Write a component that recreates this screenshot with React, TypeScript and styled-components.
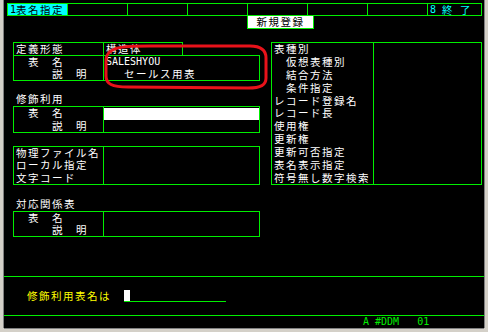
import React from 'react';
import styled, { createGlobalStyle } from 'styled-components';

const GREEN = '#00ee00';
const CYAN = '#00ffff';
const YELLOW = '#ffff00';

const GlobalStyle = createGlobalStyle`
  html, body {
    margin: 0;
    padding: 0;
    background: #d4d0c8;
  }
  body {
    width: 488px;
    height: 332px;
    overflow: hidden;
    font-family: "Noto Sans CJK JP", sans-serif;
  }
`;

const Window = styled.div`
  width: 488px;
  height: 332px;
  padding-left: 4px;
  box-sizing: border-box;
  background: #d4d0c8;
`;

const Screen = styled.div`
  position: relative;
  display: flex;
  flex-direction: column;
  width: 480px;
  height: 328px;
  padding-top: 3px;
  box-sizing: border-box;
  background: #000;
  color: #fff;
  box-shadow: -1px 0 0 #808080, 1px 0 0 #808080, 0 1px 0 #808080;
`;

const Jp = styled.span<{ $color?: string }>`
  display: inline-block;
  font-family: "Noto Sans CJK JP", sans-serif;
  font-size: 10.5px;
  letter-spacing: 1.5px;
  line-height: 10px;
  white-space: pre;
  vertical-align: top;
  color: ${props => props.$color ?? 'inherit'};
`;

const Ascii = styled.span<{ $color?: string }>`
  display: inline-block;
  font-family: "DejaVu Sans Mono", monospace;
  font-size: 10px;
  line-height: 10px;
  white-space: pre;
  vertical-align: top;
  color: ${props => props.$color ?? 'inherit'};
`;

/* function key bar */
const TopBar = styled.div`
  display: flex;
  width: 475px;
  height: 13px;
  margin-left: 3px;
  box-sizing: border-box;
  border: 1px solid ${GREEN};
`;

const FKey = styled.div<{ $active?: boolean }>`
  display: flex;
  align-items: center;
  flex: none;
  width: 60px;
  padding-left: 2px;
  box-sizing: border-box;
  border-right: 1px solid ${GREEN};
  background: ${props => props.$active ? CYAN : 'transparent'};
  color: ${props => props.$active ? '#000' : CYAN};

  &:last-child {
    flex: 1;
    border-right: none;
  }
`;

const ActionRow = styled.div`
  display: flex;
  height: 13px;
  padding-left: 243px;
`;

const ActionButton = styled.div`
  display: flex;
  align-items: center;
  justify-content: center;
  width: 67px;
  height: 13px;
  box-sizing: border-box;
  border: 1px solid ${GREEN};
  border-top: none;
  background: #fff;
  color: #000;
`;

/* body */
const Body = styled.div`
  display: flex;
  align-items: flex-start;
  gap: 11px;
  margin-top: 13px;
  padding-left: 9px;
`;

const LeftColumn = styled.div`
  display: flex;
  flex-direction: column;
  width: 247px;
`;

const FieldBox = styled.div<{ $width: number; $height: number; $labelWidth: number; $gap?: number }>`
  display: grid;
  grid-template-columns: ${props => props.$labelWidth}px 1fr;
  width: ${props => props.$width}px;
  height: ${props => props.$height}px;
  margin-top: ${props => props.$gap ?? 0}px;
  box-sizing: border-box;
  border: 1px solid ${GREEN};
`;

const Column = styled.div<{ $rows: number; $divider?: boolean; $pad?: number }>`
  display: grid;
  grid-template-rows: repeat(${props => props.$rows}, 1fr);
  align-items: center;
  padding-left: ${props => props.$pad ?? 2}px;
  border-right: ${props => props.$divider ? `1px solid ${GREEN}` : 'none'};
  min-height: 0;
`;

const Line = styled.div`
  display: flex;
  align-items: center;
`;

const SectionLabel = styled.div<{ $gap: number }>`
  display: flex;
  align-items: center;
  height: 13px;
  margin-top: ${props => props.$gap}px;
  padding-left: 3px;
`;

const InputField = styled.div`
  align-self: start;
  height: 12px;
  margin-top: 1px;
  background: #fff;
`;

/* footer */
const Rule = styled.div<{ $gap: number }>`
  height: 1px;
  margin-top: ${props => props.$gap}px;
  background: ${GREEN};
`;

const PromptRow = styled.div`
  display: flex;
  align-items: flex-start;
  height: 13px;
  margin-top: 12px;
  padding-left: 23px;
`;

const PromptText = styled.div`
  display: flex;
  align-items: center;
  height: 13px;
`;

const PromptInput = styled.div`
  display: flex;
  width: 102px;
  height: 11px;
  margin: 1px 0 0 13px;
  border-bottom: 1px solid ${GREEN};
`;

const Cursor = styled.div`
  width: 6px;
  height: 11px;
  background: #fff;
`;

const StatusRow = styled.div`
  display: flex;
  align-items: center;
  height: 12px;
  padding-left: 359px;
  color: ${GREEN};
`;

const Annotation = styled.svg`
  position: absolute;
  top: 0;
  left: 0;
  pointer-events: none;
`;

const emptyKeys = [2, 3, 4, 5, 6, 7];

const rightLabels = [
  '表種別',
  '　仮想表種別',
  '　結合方法',
  '　条件指定',
  'レコード登録名',
  'レコード長',
  '使用権',
  '更新権',
  '更新可否指定',
  '表名表示指定',
  '符号無し数字検索',
];

const NameLabels = () => (
  <>
    <Line><Jp>　表　名</Jp></Line>
    <Line><Jp>　　　説　明</Jp></Line>
  </>
);

export default function App() {
  return (
    <Window>
      <GlobalStyle/>
      <Screen>
        <TopBar>
          <FKey $active><Ascii>1</Ascii><Jp>表名指定</Jp></FKey>
          {emptyKeys.map(k => <FKey key={k}/>)}
          <FKey><Ascii>8 </Ascii><Jp>終</Jp><Ascii> </Ascii><Jp>了</Jp></FKey>
        </TopBar>
        <ActionRow>
          <ActionButton><Jp>新規登録</Jp></ActionButton>
        </ActionRow>

        <Body>
          <LeftColumn>
            <FieldBox $width={170} $height={14} $labelWidth={90}>
              <Column $rows={1} $divider><Line><Jp>定義形態</Jp></Line></Column>
              <Column $rows={1}><Line><Jp>構造体</Jp></Line></Column>
            </FieldBox>
            <FieldBox $width={247} $height={26} $labelWidth={90} $gap={-1}>
              <Column $rows={2} $divider><NameLabels/></Column>
              <Column $rows={2}>
                <Line><Ascii>SALESHYOU</Ascii></Line>
                <Line><Ascii>   </Ascii><Jp>セールス用表</Jp></Line>
              </Column>
            </FieldBox>

            <SectionLabel $gap={11}><Jp>修飾利用</Jp></SectionLabel>
            <FieldBox $width={247} $height={27} $labelWidth={90} $gap={1}>
              <Column $rows={2} $divider><NameLabels/></Column>
              <Column $rows={2} $pad={0}>
                <InputField/>
                <span/>
              </Column>
            </FieldBox>

            <FieldBox $width={247} $height={39} $labelWidth={90} $gap={13}>
              <Column $rows={3} $divider>
                <Line><Jp>物理ファイル名</Jp></Line>
                <Line><Jp>ローカル指定</Jp></Line>
                <Line><Jp>文字コード</Jp></Line>
              </Column>
              <Column $rows={3}/>
            </FieldBox>

            <SectionLabel $gap={12}><Jp>対応関係表</Jp></SectionLabel>
            <FieldBox $width={247} $height={26} $labelWidth={90} $gap={1}>
              <Column $rows={2} $divider><NameLabels/></Column>
              <Column $rows={2}/>
            </FieldBox>
          </LeftColumn>

          <FieldBox $width={211} $height={143} $labelWidth={102}>
            <Column $rows={11} $divider>
              {rightLabels.map(label => <Line key={label}><Jp>{label}</Jp></Line>)}
            </Column>
            <Column $rows={11}/>
          </FieldBox>
        </Body>

        <Rule $gap={39}/>
        <PromptRow>
          <PromptText><Jp $color={YELLOW}>修飾利用表名は</Jp></PromptText>
          <PromptInput><Cursor/></PromptInput>
        </PromptRow>
        <Rule $gap={13}/>
        <StatusRow><Ascii>A #DDM   01</Ascii></StatusRow>

        <Annotation width={480} height={328} viewBox="4 0 480 328">
          <path
            d="M108 54 C112 47 124 46 150 46 L250 46 C262 46 266 51 266 58 L266 78 C266 85 261 88 248 88 L128 87 C112 87 106 84 106 76 L106 60 C106 57 107 55 108 54"
            fill="none"
            stroke="#e8121a"
            strokeWidth={3}
            strokeLinecap="round"
          />
        </Annotation>
      </Screen>
    </Window>
  );
}
